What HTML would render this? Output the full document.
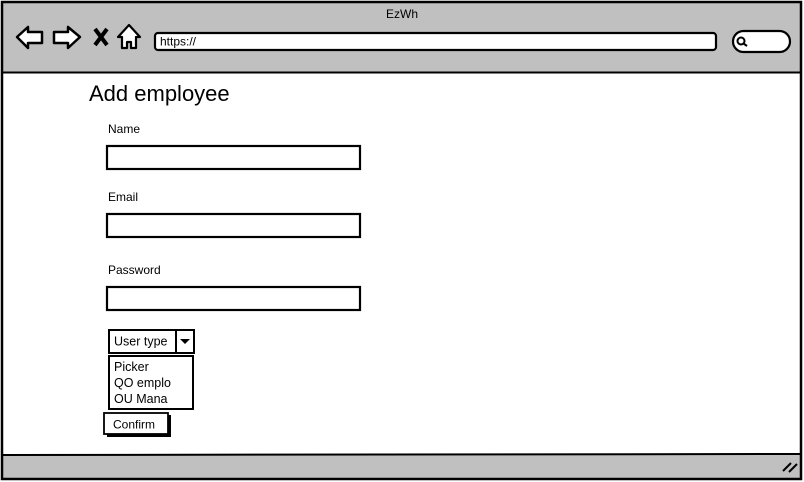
<!DOCTYPE html>
<html><head><meta charset="utf-8"><style>
html,body{margin:0;padding:0;background:#fff;width:804px;height:482px;overflow:hidden}
svg{display:block}
text{font-family:"Liberation Sans",sans-serif;fill:#000}
</style></head><body>
<svg width="804" height="482" viewBox="0 0 804 482">
<rect x="0" y="0" width="804" height="482" fill="#fff"/>
<!-- top bar -->
<rect x="2" y="2" width="800" height="71" fill="#c0c0c0"/>
<line x1="2" y1="72.5" x2="802" y2="72.5" stroke="#000" stroke-width="2"/>
<!-- bottom bar -->
<rect x="2" y="455" width="800" height="24" fill="#c0c0c0"/>
<line x1="2" y1="455" x2="802" y2="454" stroke="#000" stroke-width="2"/>
<!-- frame -->
<rect x="2" y="2" width="799" height="477" fill="none" stroke="#000" stroke-width="2.5"/>
<text x="402" y="18" font-size="12" text-anchor="middle">EzWh</text>
<!-- back arrow -->
<path d="M17 37 L28 27 L28 32 L42 32 L42 43 L28 43 L28 48 Z" fill="#fff" stroke="#000" stroke-width="2.5" stroke-linejoin="round"/>
<!-- forward arrow -->
<path d="M80 37 L68 27 L68 32 L54 32 L54 43 L68 43 L68 48 Z" fill="#fff" stroke="#000" stroke-width="2.5" stroke-linejoin="round"/>
<!-- X -->
<path d="M95 29 L107 45 M107 29 L95 45" stroke="#000" stroke-width="4"/>
<!-- home -->
<path d="M129 25 L140 37 L136 37 L136 48 L131 48 L131 42 L127 42 L127 48 L122 48 L122 37 L118 37 Z" fill="#fff" stroke="#000" stroke-width="2.2" stroke-linejoin="round"/>
<!-- url bar -->
<rect x="155" y="33" width="561" height="17" rx="3" fill="#fff" stroke="#000" stroke-width="2.2"/>
<text x="160" y="45.5" font-size="12">https://</text>
<!-- search -->
<rect x="733" y="31" width="57" height="21" rx="10.5" fill="#fff" stroke="#000" stroke-width="2.2"/>
<circle cx="741" cy="41" r="3.5" fill="none" stroke="#000" stroke-width="2"/>
<line x1="743.5" y1="43.5" x2="747" y2="46" stroke="#000" stroke-width="2"/>
<!-- resize grip -->
<path d="M783 471 L791 463 M789 472 L797 464" stroke="#000" stroke-width="2"/>
<!-- content -->
<text x="89" y="101" font-size="22">Add employee</text>
<text x="108" y="133" font-size="12">Name</text>
<rect x="107" y="146" width="253" height="23" fill="#fff" stroke="#000" stroke-width="2.2"/>
<text x="108" y="201" font-size="12">Email</text>
<rect x="107" y="214" width="253" height="23" fill="#fff" stroke="#000" stroke-width="2.2"/>
<text x="108" y="274" font-size="12">Password</text>
<rect x="107" y="287" width="253" height="23" fill="#fff" stroke="#000" stroke-width="2.2"/>
<!-- dropdown -->
<rect x="109" y="330" width="85" height="23" fill="#fff" stroke="#000" stroke-width="2"/>
<line x1="176" y1="330" x2="176" y2="353" stroke="#000" stroke-width="2"/>
<text x="114" y="345.5" font-size="12.5">User type</text>
<path d="M180 339 L190 339 L185 344 Z" fill="#000"/>
<rect x="109" y="356" width="84" height="53" fill="#fff" stroke="#000" stroke-width="2"/>
<text x="114" y="371" font-size="12.5">Picker</text>
<text x="114" y="387" font-size="12.5">QO emplo</text>
<text x="114" y="403" font-size="12.5">OU Mana</text>
<!-- confirm -->
<rect x="107" y="415" width="64" height="22" fill="#000"/>
<rect x="104" y="413" width="64" height="21" fill="#fff" stroke="#000" stroke-width="1.8"/>
<text x="113" y="428.5" font-size="12">Confirm</text>
</svg>
</body></html>
